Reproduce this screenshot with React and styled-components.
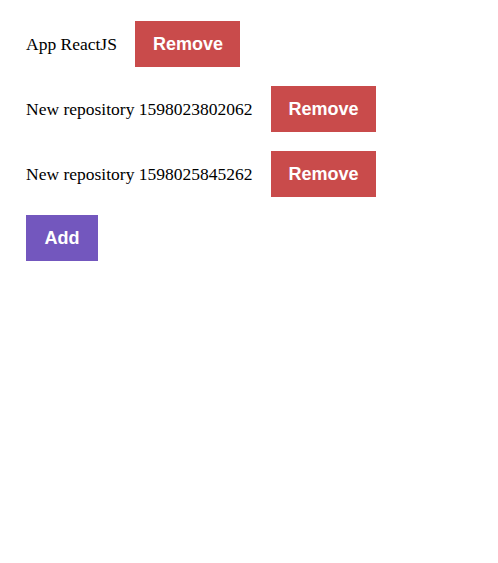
import styled, { createGlobalStyle } from "styled-components";

const GlobalStyle = createGlobalStyle`
  body {
    margin: 0;
    background: #fff;
    font-family: "Liberation Serif", "Times New Roman", serif;
    font-size: 17.5px;
    color: #000;
  }
`;

const Box = styled.div`
  display: flex;
  flex-direction: column;
  align-items: flex-start;
  padding: 21px 26px;
`;

const List = styled.ul`
  list-style: none;
  margin: 0;
  padding: 0;
  display: flex;
  flex-direction: column;
  gap: 19px;
`;

const Item = styled.li`
  display: flex;
  align-items: center;
  gap: 18.5px;
`;

const Button = styled.button`
  height: 46px;
  padding: 0 17.5px;
  border: 0;
  border-radius: 0;
  background: ${(p) => (p.$add ? "#7357be" : "#c94b4b")};
  color: #fff;
  font-family: "Liberation Sans", Arial, sans-serif;
  font-weight: 700;
  font-size: 18px;
  cursor: pointer;
`;

const AddButton = styled(Button)`
  margin-top: 18px;
  padding: 0 18.5px;
`;

const repos = [
  { id: 1, title: "App ReactJS" },
  { id: 2, title: "New repository 1598023802062" },
  { id: 3, title: "New repository 1598025845262" },
];

const App = () => {
  return (
    <Box>
      <GlobalStyle />
      <List>
        {repos.map((r) => (
          <Item key={r.id}>
            {r.title}
            <Button>Remove</Button>
          </Item>
        ))}
      </List>
      <AddButton $add>Add</AddButton>
    </Box>
  );
};

export default App;
